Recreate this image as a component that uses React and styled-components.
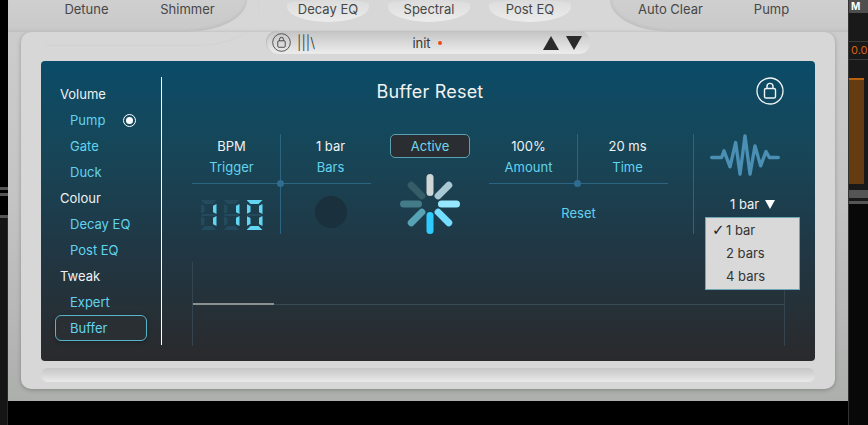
import styled, { createGlobalStyle } from 'styled-components'

const GlobalStyle = createGlobalStyle`
  html, body {
    margin: 0;
    background: #000;
  }
  body {
    font-family: Inter, "Liberation Sans", sans-serif;
    font-size: 13px;
    overflow: hidden;
  }
`

const SEGMENTS = {
  0: ['a', 'b', 'c', 'd', 'e', 'f'],
  1: ['b', 'c'],
}

const SEGMENT_SHAPES = {
  a: 'polygon(0 0, 100% 0, calc(100% - 4px) 100%, 4px 100%)',
  d: 'polygon(4px 0, calc(100% - 4px) 0, 100% 100%, 0 100%)',
  g: 'polygon(2px 0, calc(100% - 2px) 0, 100% 100%, 0 100%)',
  f: 'polygon(0 0, 100% 2px, 100% calc(100% - 2px), 0 100%)',
  e: 'polygon(0 0, 100% 2px, 100% calc(100% - 2px), 0 100%)',
  b: 'polygon(0 2px, 100% 0, 100% 100%, 0 calc(100% - 2px))',
  c: 'polygon(0 2px, 100% 0, 100% 100%, 0 calc(100% - 2px))',
}

const SPOKES = [
  { angle: 0, color: '#d0d5d6' },
  { angle: 45, color: '#a9c9d5' },
  { angle: 90, color: '#97e8ff' },
  { angle: 135, color: '#73deff' },
  { angle: 180, color: '#2ecbff' },
  { angle: 225, color: '#57a3b5' },
  { angle: 270, color: '#437b89' },
  { angle: 315, color: '#345d67' },
]

function LockIcon({ size, color }) {
  return (
    <svg width={size} height={size} viewBox="0 0 28 28" fill="none" stroke={color}>
      <circle cx="14" cy="14" r="13" strokeWidth="1.3" />
      <path d="M11 11.5V9.4a3 3 0 0 1 6 0v2.1" strokeWidth="1.4" />
      <rect x="8.5" y="11.5" width="11" height="9.5" rx="1.6" strokeWidth="1.4" />
    </svg>
  )
}

function LedDigit({ value }) {
  const lit = SEGMENTS[value]
  return (
    <Digit>
      {['a', 'f', 'b', 'g', 'e', 'c', 'd'].map((name) => (
        <Segment key={name} $name={name} $lit={lit.includes(name)} />
      ))}
    </Digit>
  )
}

function Spinner() {
  return (
    <svg width="60" height="60" viewBox="-30 -30 60 60">
      {SPOKES.map((spoke) => (
        <rect
          key={spoke.angle}
          x="-3.5"
          y="-30"
          width="7"
          height="22"
          rx="3.5"
          fill={spoke.color}
          transform={`rotate(${spoke.angle})`}
        />
      ))}
    </svg>
  )
}

function App() {
  return (
    <Page>
      <GlobalStyle />
      <LeftStrip>
        <StripGap $height={187} />
        <StripLine $height={3} />
        <StripGap $height={3} />
        <StripLine $height={3} />
        <StripGap $height={19} />
        <StripLine $height={3} />
        <StripRest />
      </LeftStrip>

      <Shell>
        <Header>
          <LeftTab>
            <TabLabel>Detune</TabLabel>
            <TabLabel>Shimmer</TabLabel>
          </LeftTab>
          <Pills>
            <Pill>Decay EQ</Pill>
            <Pill>Spectral</Pill>
            <Pill>Post EQ</Pill>
          </Pills>
          <RightTab>
            <TabLabel>Auto Clear</TabLabel>
            <TabLabel>Pump</TabLabel>
          </RightTab>
        </Header>

        <Body>
          <PresetBar>
            <PresetLeft>
              <LockIcon size={19} color="#444" />
              <PresetMark>|||\</PresetMark>
            </PresetLeft>
            <PresetName>
              init
              <RedDot />
            </PresetName>
            <PresetArrows>
              <Arrow $dir="up" />
              <Arrow $dir="down" />
            </PresetArrows>
          </PresetBar>

          <Screen>
            <Sidebar>
              <GroupLabel>Volume</GroupLabel>
              <NavItem>
                Pump
                <Radio />
              </NavItem>
              <NavItem>Gate</NavItem>
              <NavItem>Duck</NavItem>
              <GroupLabel>Colour</GroupLabel>
              <NavItem>Decay EQ</NavItem>
              <NavItem>Post EQ</NavItem>
              <GroupLabel>Tweak</GroupLabel>
              <NavItem>Expert</NavItem>
              <NavItem $active>Buffer</NavItem>
            </Sidebar>

            <Main>
              <TitleRow>
                <Title>Buffer Reset</Title>
                <TitleLock>
                  <LockIcon size={28} color="#f2f5f6" />
                </TitleLock>
              </TitleRow>

              <Controls>
                <Cross>
                  <Cell $side="left" $line>
                    <Value>BPM</Value>
                    <Label>Trigger</Label>
                  </Cell>
                  <Cell $side="right">
                    <Value>1 bar</Value>
                    <Label>Bars</Label>
                  </Cell>
                  <BottomCell $side="left" $line>
                    <Led role="img" aria-label="110">
                      <LedDigit value={1} />
                      <LedDigit value={1} />
                      <LedDigit value={0} />
                    </Led>
                  </BottomCell>
                  <BottomCell $side="right">
                    <Knob />
                  </BottomCell>
                  <CrossDot />
                </Cross>

                <Centre>
                  <ActiveButton>Active</ActiveButton>
                  <Spinner />
                </Centre>

                <Cross>
                  <Cell $side="left" $line>
                    <Value>100%</Value>
                    <Label>Amount</Label>
                  </Cell>
                  <Cell $side="right">
                    <Value>20 ms</Value>
                    <Label>Time</Label>
                  </Cell>
                  <ResetCell>Reset</ResetCell>
                  <CrossDot />
                </Cross>

                <SelectCol>
                  <svg width="70" height="42" viewBox="120 40 210 125" fill="none">
                    <polyline
                      points="125,110 155,110 162,90 180,138 197,65 210,160 225,45 240,160 255,75 272,135 288,92 298,110 325,110"
                      stroke="#4b8fb4"
                      strokeWidth="10"
                      strokeLinecap="round"
                      strokeLinejoin="round"
                    />
                  </svg>
                  <SelectValue>
                    1 bar
                    <SelectArrow />
                  </SelectValue>
                  <Menu>
                    <MenuItem $checked>1 bar</MenuItem>
                    <MenuItem>2 bars</MenuItem>
                    <MenuItem>4 bars</MenuItem>
                  </Menu>
                </SelectCol>
              </Controls>

              <Graph>
                <GraphTrack>
                  <GraphFill />
                </GraphTrack>
              </Graph>
            </Main>
          </Screen>

          <Trough />
        </Body>
      </Shell>

      <RightStrip>
        <MuteButton>M</MuteButton>
        <MeterGap $height={28} />
        <MeterReadout>0.0</MeterReadout>
        <MeterGap $height={18} />
        <MeterBar />
        <MeterGap $height={6} />
        <StripLine $height={8} />
        <MeterGap $height={3} />
        <StripLine $height={3} />
        <StripBlack />
      </RightStrip>
    </Page>
  )
}

const Page = styled.div`
  display: flex;
  width: 868px;
  height: 425px;
  background: #000;
  overflow: hidden;
`

const LeftStrip = styled.div`
  display: flex;
  flex-direction: column;
  width: 8px;
  height: 425px;
`

const StripGap = styled.div`
  height: ${(props) => props.$height}px;
  background: #000;
`

const StripLine = styled.div`
  height: ${(props) => props.$height}px;
  background: #555;
`

const StripRest = styled.div`
  flex: 1;
  background: #151515;
  border-right: 1px solid #2a2a2a;
`

const Shell = styled.div`
  width: 840px;
  height: 401px;
  background: linear-gradient(#cecece, #c4c4c4 50%, #adafad);
  color: #444;
`

const Header = styled.div`
  display: flex;
  height: 32px;
  background: #d7d7d7;
`

const LeftTab = styled.div`
  position: relative;
  display: grid;
  grid-template-columns: 101px 101px;
  width: 239px;
  padding-left: 28px;
  box-sizing: border-box;
  background: linear-gradient(#cfcfcf, #c9c9c9);
  border-bottom-right-radius: 62px 32px;
  box-shadow: inset -1px -2px 3px rgba(0, 0, 0, 0.05);

  &::after {
    content: '';
    position: absolute;
    top: 0;
    left: 38px;
    width: 212px;
    height: 45px;
    border-right: 1px solid rgba(0, 0, 0, 0.012);
    border-bottom: 1px solid rgba(0, 0, 0, 0.025);
    border-bottom-right-radius: 62px 34px;
    pointer-events: none;
  }
`

const RightTab = styled.div`
  position: relative;
  display: grid;
  grid-template-columns: 101px 101px;
  flex: 1;
  padding-left: 10px;
  background: linear-gradient(#cfcfcf, #c9c9c9);
  border-bottom-left-radius: 62px 32px;
  box-shadow: inset 1px -2px 3px rgba(0, 0, 0, 0.05);
`

const TabLabel = styled.div`
  height: 19px;
  line-height: 19px;
  text-align: center;
  color: #474747;
`

const Pills = styled.div`
  display: flex;
  gap: 19px;
  width: 363px;
  padding-left: 40px;
  box-sizing: border-box;
`

const Pill = styled.div`
  width: 82px;
  height: 22px;
  line-height: 19px;
  text-align: center;
  color: #474747;
  background: linear-gradient(#dcdcdc, #ececec);
  border-radius: 41px 41px 41px 41px / 4px 4px 15px 15px;
`

const Body = styled.div`
  display: flex;
  flex-direction: column;
  align-items: center;
  width: 814px;
  height: 357px;
  margin-left: 13px;
  background: #d7d7d7;
  border-radius: 10px;
  box-shadow: 0 1px 4px rgba(0, 0, 0, 0.25);
`

const PresetBar = styled.div`
  display: grid;
  grid-template-columns: 1fr auto 1fr;
  align-items: center;
  width: 324px;
  height: 23px;
  margin-top: -1px;
  flex-shrink: 0;
  padding: 0 8px 0 6px;
  box-sizing: border-box;
  background: linear-gradient(#c4c4c4, #ededed);
  border-radius: 11px;
  box-shadow: inset 1px 0 1px rgba(0, 0, 0, 0.12);
`

const PresetLeft = styled.div`
  display: flex;
  align-items: center;
  gap: 6px;
`

const PresetMark = styled.span`
  font-size: 14px;
  font-weight: 300;
  line-height: 20px;
  color: #333;
`

const PresetName = styled.div`
  display: flex;
  align-items: center;
  gap: 7px;
  color: #383838;
`

const RedDot = styled.span`
  width: 4px;
  height: 4px;
  border-radius: 50%;
  background: #f4490d;
`

const PresetArrows = styled.div`
  display: flex;
  justify-content: flex-end;
  gap: 7px;
`

const Arrow = styled.span`
  width: 0;
  height: 0;
  border-left: 8px solid transparent;
  border-right: 8px solid transparent;
  border-${(props) => (props.$dir === 'up' ? 'bottom' : 'top')}: 14px solid #2a2a2a;
`

const Screen = styled.div`
  display: flex;
  width: 774px;
  height: 300px;
  margin-top: 7px;
  flex-shrink: 0;
  color: #f0f2f3;
  background: linear-gradient(#0b4b68, #164759 28%, #1f3947 58%, #2a2a2c);
  border-radius: 4px;
`

const Sidebar = styled.div`
  width: 121px;
  height: 268px;
  margin-top: 16px;
  padding-top: 4px;
  box-sizing: border-box;
  border-right: 1px solid #fff;
`

const GroupLabel = styled.div`
  height: 26px;
  line-height: 26px;
  margin-left: 14px;
  padding-left: 5px;
`

const NavItem = styled.div`
  display: flex;
  align-items: center;
  justify-content: space-between;
  width: 92px;
  height: 26px;
  margin-left: 14px;
  padding: 0 10px 0 14px;
  box-sizing: border-box;
  color: #62d3ef;
  border-radius: 6px;
  border: 1px solid transparent;
  ${(props) =>
    props.$active &&
    `
    border-color: #57b4c9;
    background: #2a2f33;
    box-shadow: 0 1px 4px rgba(0, 0, 0, 0.3);
  `}
`

const Radio = styled.span`
  width: 13px;
  height: 13px;
  box-sizing: border-box;
  border-radius: 50%;
  border: 1.5px solid #fff;
  padding: 2px;
  background: #fff content-box;
`

const Main = styled.div`
  flex: 1;
  padding: 16px 30px 0;
`

const TitleRow = styled.div`
  display: grid;
  grid-template-columns: 476px 1fr;
  align-items: center;
  height: 28px;
`

const Title = styled.div`
  font-size: 18px;
  letter-spacing: 0.2px;
  margin-top: 1px;
  text-align: center;
`

const TitleLock = styled.div`
  display: flex;
  justify-content: flex-end;
  padding-right: 1px;
`

const Controls = styled.div`
  position: relative;
  display: grid;
  grid-template-columns: 179px 80px 179px auto;
  column-gap: 19px;
  height: 100px;
  margin-top: 29px;
`

const Cross = styled.div`
  position: relative;
  display: grid;
  grid-template-columns: 89px 90px;
  grid-template-rows: 50px 50px;
`

const Cell = styled.div`
  padding-top: 4px;
  text-align: center;
  border-bottom: 1px solid #2d6482;
  box-sizing: border-box;
  border-right: ${(props) => (props.$line ? '1px solid #2d6482' : 'none')};
  padding-${(props) => (props.$side === 'left' ? 'right' : 'left')}: 9px;
`

const BottomCell = styled.div`
  display: flex;
  justify-content: center;
  align-items: center;
  box-sizing: border-box;
  border-right: ${(props) => (props.$line ? '1px solid #2d6482' : 'none')};
  padding-${(props) => (props.$side === 'left' ? 'right' : 'left')}: 9px;
`

const ResetCell = styled.div`
  grid-column: 1 / 3;
  padding-top: 21px;
  text-align: center;
  color: #62d3ef;
`

const Value = styled.div`
  height: 16px;
  line-height: 16px;
`

const Label = styled.div`
  height: 16px;
  line-height: 16px;
  margin-top: 5px;
  color: #62d3ef;
`

const CrossDot = styled.span`
  position: absolute;
  left: 85px;
  top: 46px;
  width: 7px;
  height: 7px;
  border-radius: 50%;
  background: #2f6c8f;
`

const Led = styled.div`
  display: flex;
  gap: 7px;
  margin-top: 12px;
`

const Digit = styled.div`
  display: grid;
  grid-template-columns: 4px 8px 4px;
  grid-template-rows: 4px 10px 2px 10px 4px;
  grid-template-areas:
    'a a a'
    'f . b'
    'g g g'
    'e . c'
    'd d d';
`

const Segment = styled.span`
  grid-area: ${(props) => props.$name};
  background: ${(props) => (props.$lit ? '#62d5f2' : '#244a5e')};
  clip-path: ${(props) => SEGMENT_SHAPES[props.$name]};
`

const Knob = styled.div`
  width: 32px;
  height: 32px;
  margin-top: 6px;
  border-radius: 50%;
  background: #1a303d;
`

const Centre = styled.div`
  display: flex;
  flex-direction: column;
  align-items: center;
  gap: 16px;
`

const ActiveButton = styled.div`
  width: 80px;
  height: 24px;
  line-height: 22px;
  box-sizing: border-box;
  text-align: center;
  color: #6fd6ef;
  background: #2a2e32;
  border: 1px solid #5b9fb2;
  border-radius: 5px;
`

const SelectCol = styled.div`
  position: relative;
  margin-left: 6px;
  width: 92px;
  padding-left: 16px;
  box-sizing: border-box;
  border-left: 1px solid #2d6482;
`

const SelectValue = styled.div`
  display: flex;
  align-items: center;
  gap: 6px;
  margin-top: 17px;
  padding-left: 20px;
  white-space: nowrap;
`

const SelectArrow = styled.span`
  width: 0;
  height: 0;
  border-left: 5px solid transparent;
  border-right: 5px solid transparent;
  border-top: 9px solid #fff;
`

const Menu = styled.div`
  position: absolute;
  left: 11px;
  top: 83px;
  width: 95px;
  height: 73px;
  padding-top: 1px;
  box-sizing: border-box;
  background: #d9d9d9;
  border: 1px solid #6fa6b6;
  z-index: 2;
`

const MenuItem = styled.div`
  position: relative;
  height: 23px;
  line-height: 23px;
  padding-left: 20px;
  color: #333;

  &::before {
    content: ${(props) => (props.$checked ? "'\\2713'" : "''")};
    position: absolute;
    left: 6px;
    font-family: "DejaVu Sans", sans-serif;
    font-size: 15px;
    font-weight: bold;
    color: #222;
  }
`

const Graph = styled.div`
  display: flex;
  align-items: center;
  height: 84px;
  margin-top: 28px;
  box-sizing: border-box;
  border-left: 1px solid #34454f;
  border-right: 1px solid #34454f;
`

const GraphTrack = styled.div`
  flex: 1;
  height: 1px;
  background: #3a4a52;
`

const GraphFill = styled.div`
  width: 81px;
  height: 2px;
  margin-top: -1px;
  background: #8b9091;
`

const Trough = styled.div`
  width: 774px;
  height: 14px;
  margin-top: 7px;
  border-radius: 7px;
  background: linear-gradient(#c6c6c6, #e9e9e9);
`

const RightStrip = styled.div`
  display: flex;
  flex-direction: column;
  width: 20px;
  height: 425px;
  background: #191919;
  border-left: 1px solid #333;
  box-sizing: border-box;
`

const MuteButton = styled.div`
  height: 13px;
  line-height: 13px;
  padding-left: 2px;
  font-size: 10px;
  font-weight: bold;
  color: #fff;
  background: #4e4e4e;
`

const MeterGap = styled.div`
  height: ${(props) => props.$height}px;
  flex-shrink: 0;
`

const MeterReadout = styled.div`
  height: 17px;
  line-height: 17px;
  padding-left: 2px;
  font-size: 11px;
  color: #d9600f;
  border-top: 1px solid #3a3a3a;
  border-bottom: 1px solid #3a3a3a;
  white-space: nowrap;
`

const MeterBar = styled.div`
  width: 15px;
  height: 106px;
  flex-shrink: 0;
  background: #653b12;
  border-top: 2px solid #b8610e;
  box-sizing: border-box;
`

const StripBlack = styled.div`
  flex: 1;
  background: #080808;
`

export default App
